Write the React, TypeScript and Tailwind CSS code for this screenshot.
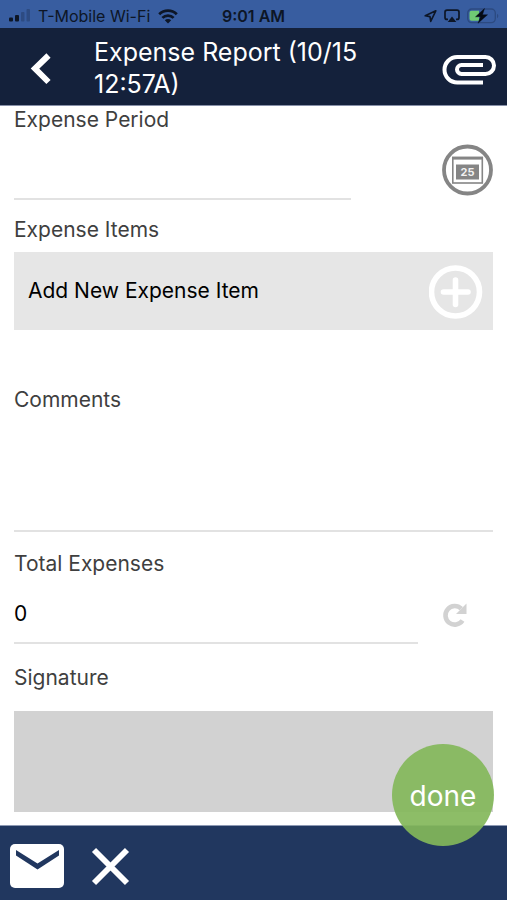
function StatusBar() {
    return (
        <div className="grid h-7 shrink-0 grid-cols-[1fr_auto_1fr] items-center bg-[#385da0] pt-1 pr-2 pl-2 text-[16px] leading-6 text-[#0d1626]">
            <div className="flex items-center gap-2">
                <svg className="h-4 w-[22px]" viewBox="0 0 22 16" fill="currentColor" aria-hidden="true">
                    <rect x="1" y="9.5" width="4" height="4" rx="1" />
                    <rect x="7" y="7" width="4" height="6.5" rx="1" />
                    <rect x="13" y="4" width="3.5" height="9.5" rx="1" opacity="0.25" />
                    <rect x="18.5" y="1" width="3.5" height="12.5" rx="1" opacity="0.25" />
                </svg>
                <span className="whitespace-nowrap">T-Mobile Wi-Fi</span>
                <svg className="h-[15px] w-5" viewBox="0 0 20 15" fill="none" stroke="currentColor" strokeWidth="2.8" aria-hidden="true">
                    <path d="M1.2 5.2a12.6 12.6 0 0 1 17.6 0" />
                    <path d="M4.4 8.9a7.8 7.8 0 0 1 11.2 0" />
                    <path d="M6.8 11.300a4.6 4.6 0 0 1 6.400 0L10 14.600z" fill="currentColor" stroke="none" />
                </svg>
            </div>
            <span className="font-semibold">9:01 AM</span>
            <div className="flex items-center justify-end gap-[7px]">
                <svg className="h-[14px] w-[14px]" viewBox="0 0 14 14" fill="none" stroke="currentColor" strokeWidth="1.6" strokeLinejoin="round" aria-hidden="true">
                    <path d="M12.8 1.800L2.200 6.800l4.800.800.700 4.800z" />
                </svg>
                <svg className="h-[14px] w-4" viewBox="0 0 16 14" fill="none" stroke="currentColor" strokeWidth="1.700" aria-hidden="true">
                    <path d="M4 10.400H3A2 2 0 0 1 1 8.400V3.200a2 2 0 0 1 2-2h10a2 2 0 0 1 2 2v5.200a2 2 0 0 1-2 2h-1" />
                    <path d="M8 7.500l4.300 5.500H3.700z" fill="currentColor" stroke="none" />
                </svg>
                <svg className="h-4 w-8" viewBox="0 0 32 16" aria-hidden="true">
                    <rect x="0.7" y="1" width="27.6" height="13.6" rx="4" fill="none" stroke="#2c4a80" strokeWidth="1.3" />
                    <path d="M4.500 2.800H12v10H4.500a2 2 0 0 1-2-2v-6a2 2 0 0 1 2-2z" fill="#6fc974" />
                    <path d="M30 5.800v4.400c1.800-.8 1.800-3.600 0-4.400z" fill="#2c4a80" />
                    <path d="M17.500.5L8.500 8.800h5L11 15.200 20.500 6.800h-5z" fill="#050b14" stroke="#050b14" strokeWidth="0.4" />
                </svg>
            </div>
        </div>
    );
}

function Header() {
    return (
        <header className="flex h-[78px] shrink-0 items-center border-b border-[#8790a8] bg-[#14213b] pr-[10px] text-white">
            <button type="button" aria-label="Back" className="ml-7 mr-[42px] pt-1">
                <svg className="h-9 w-6" viewBox="0 0 24 36" fill="none" stroke="currentColor" strokeWidth="6">
                    <path d="M20.500 4.500L7 17.500l13.500 13.500" />
                </svg>
            </button>
            <h1 className="max-w-[300px] flex-1 pt-[2px] text-[25px] leading-8">Expense Report (10/15 12:57A)</h1>
            <button type="button" aria-label="Attachments" className="ml-auto pt-1">
                <svg className="h-8 w-14" viewBox="0 0 56 32" fill="none" stroke="currentColor" strokeWidth="4">
                    <path d="M42 29.500H16.250a12.750 12.750 0 0 1 0-25.500H44.500a8.500 8.500 0 0 1 0 17H20.500a4.500 4.500 0 0 1 0-9H42" />
                </svg>
            </button>
        </header>
    );
}

export default function App() {
    return (
        <div className="flex min-h-screen flex-col bg-white font-[Inter,'Liberation_Sans',sans-serif]">
            <StatusBar />
            <Header />

            <main className="flex-1 px-[14px] pb-[13px] text-[21px] leading-7 text-[#3f3f3f]">
                <label htmlFor="period" className="block">Expense Period</label>
                <div className="flex h-[66px] gap-[90px]">
                    <input id="period" type="text" className="min-w-0 flex-1 border-b-2 border-[#e2e2e2] text-black outline-none" />
                    <button type="button" aria-label="Pick a date" className="mb-1 self-end">
                        <svg className="h-[52px] w-[52px]" viewBox="0 0 52 52" fill="none" stroke="#858585">
                            <circle cx="26.500" cy="26" r="23.500" strokeWidth="3.800" />
                            <rect x="11.800" y="13.500" width="29.500" height="25.500" strokeWidth="1.600" />
                            <path d="M11 14.200h31" strokeWidth="2.800" />
                            <rect x="15" y="20.500" width="23" height="15" fill="#858585" stroke="none" />
                            <text x="26.500" y="32" textAnchor="middle" fontSize="11" fontWeight="700" fill="#f2f2f2" stroke="none">25</text>
                        </svg>
                    </button>
                </div>

                <h2 className="mt-4">Expense Items</h2>
                <button type="button" className="mt-2 flex h-[78px] w-full items-center justify-between bg-[#e6e6e6] pr-[10px] pl-[14px] text-left text-black">
                    Add New Expense Item
                    <svg className="mt-[2px] h-[54px] w-[54px]" viewBox="0 0 54 54" fill="none" stroke="white" strokeWidth="5.600" aria-hidden="true">
                        <circle cx="26.500" cy="27" r="24" />
                        <path d="M26.500 15v24.500M14.500 27h24.500" strokeLinecap="round" />
                    </svg>
                </button>

                <label htmlFor="comments" className="mt-14 block">Comments</label>
                <textarea id="comments" className="block h-[118px] w-full resize-none border-b-2 border-[#e2e2e2] text-black outline-none" />

                <label htmlFor="total" className="mt-[18px] block">Total Expenses</label>
                <div className="flex h-[66px] gap-6 pr-[25px]">
                    <input id="total" type="text" defaultValue="0" className="min-w-0 flex-1 border-b-2 border-[#e2e2e2] pt-2 text-black outline-none" />
                    <button type="button" aria-label="Recalculate" className="pt-2">
                        <svg className="h-[26px] w-[26px]" viewBox="0 0 26 26" fill="none" stroke="#d2d2d2" strokeWidth="4.600">
                            <path d="M20.500 18.500a9.300 9.300 0 1 1-1.200-11.800" />
                            <path d="M24.500 1.500v10.500H14z" fill="#d2d2d2" stroke="none" />
                        </svg>
                    </button>
                </div>

                <h2 className="mt-5">Signature</h2>
                <button type="button" aria-label="Sign here" className="mt-[19px] block h-[101px] w-full bg-[#d2d2d2]" />
            </main>

            <footer className="relative flex h-[75px] shrink-0 items-center gap-[26px] border-t border-[#8d99b3] bg-[#21375f] pt-[6px] pl-[10px] text-white">
                <button type="button" aria-label="Mail">
                    <svg className="h-11 w-[54px]" viewBox="0 0 54 44">
                        <rect width="54" height="44" rx="5" fill="currentColor" />
                        <path d="M6 6l21.500 13.500L49 6v5.500L27.500 25.500 6 11.500z" fill="#21375f" />
                    </svg>
                </button>
                <button type="button" aria-label="Cancel">
                    <svg className="h-10 w-10" viewBox="0 0 40 40" fill="none" stroke="currentColor" strokeWidth="5.800">
                        <path d="M4 4l33 33M37 4L4 37" />
                    </svg>
                </button>
                <button type="button" className="absolute -top-[82px] right-[13px] h-[102px] w-[102px] rounded-full bg-[#83b75a]/92 pt-[2px] text-[28px] leading-8">
                    done
                </button>
            </footer>
        </div>
    );
}
